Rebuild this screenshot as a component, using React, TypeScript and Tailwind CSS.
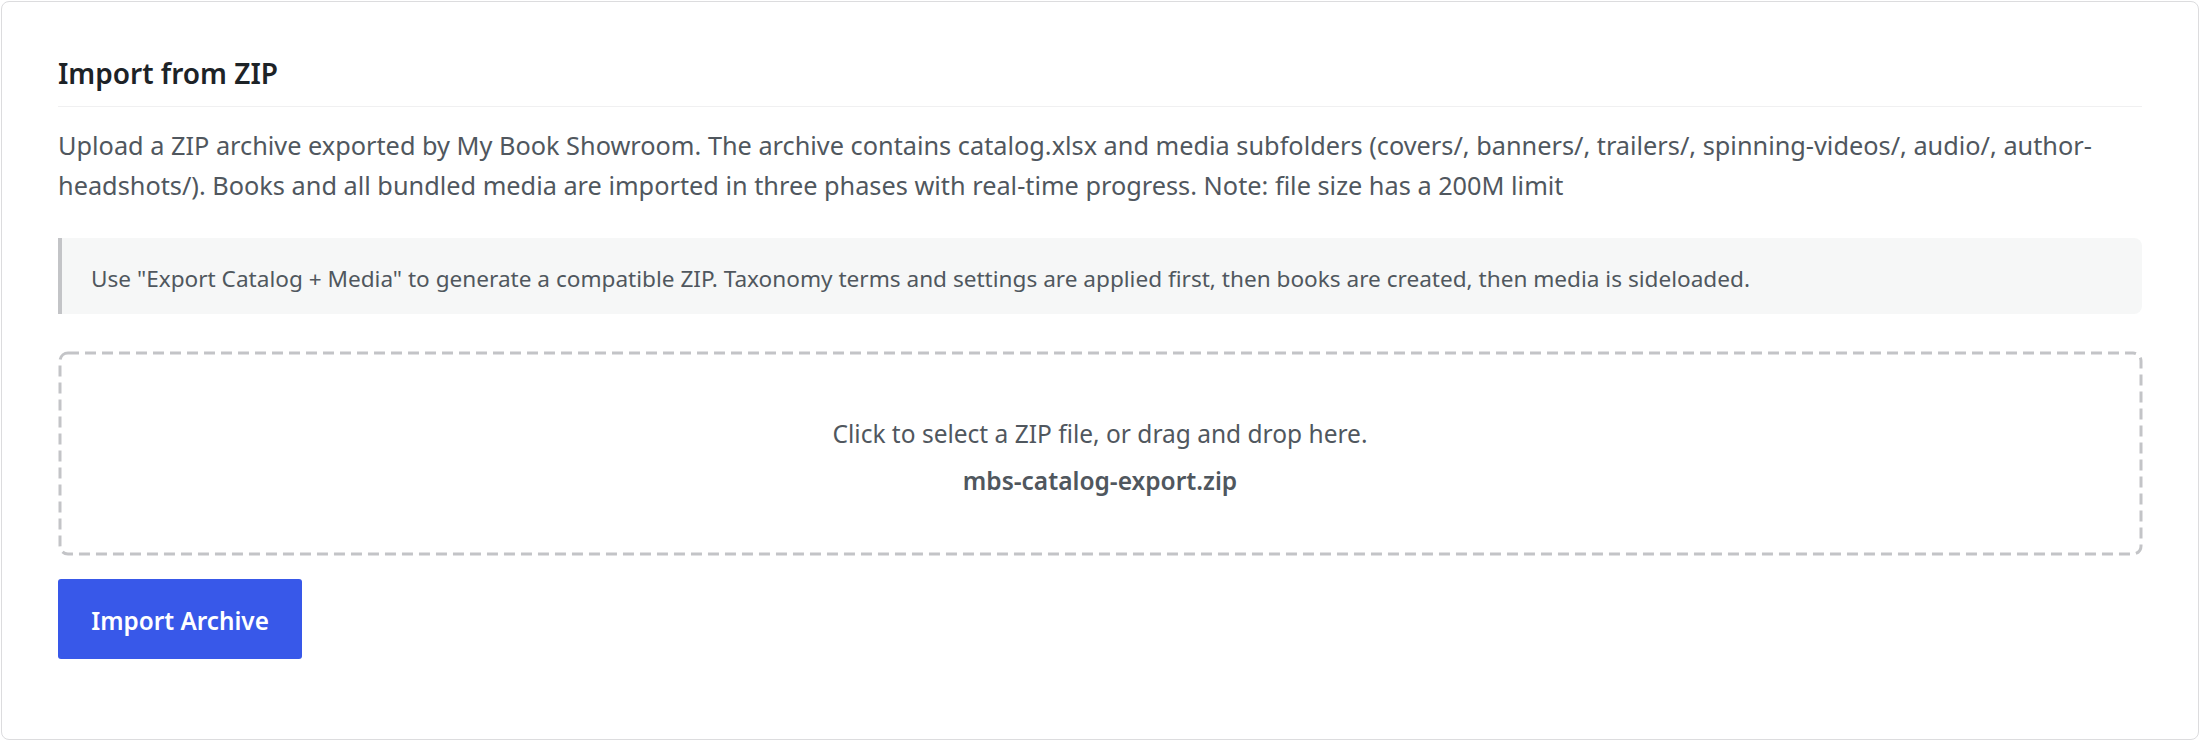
import React from "react";

export default function App() {
  const font = { fontFamily: '"Noto Sans", "Open Sans", sans-serif' };
  return (
    <div className="bg-white p-px" style={font}>
      <div className="rounded-lg border border-[#dcdcde] bg-white px-14 pt-[54px] pb-[80px]">
        <h2 className="border-b border-[#f0f0f1] pb-4 text-[28px] font-semibold leading-[34px] text-[#1d2327]">
          Import from ZIP
        </h2>
        <p className="mt-[18px] text-[25.3px] leading-[40px] text-[#50575e]">
          Upload a ZIP archive exported by My Book Showroom. The archive contains catalog.xlsx and media subfolders
          (covers/, banners/, trailers/, spinning-videos/, audio/, author-headshots/). Books and all bundled media are
          imported in three phases with real-time progress. Note: file size has a 200M limit
        </p>
        <div className="mt-[33px] rounded-r-lg border-l-4 border-[#c3c4c7] bg-[#f6f7f7] pt-[25px] pb-[19px] pl-[29px] text-[22.6px] leading-[32px] text-[#50575e]">
          Use "Export Catalog + Media" to generate a compatible ZIP. Taxonomy terms and settings are applied first, then
          books are created, then media is sideloaded.
        </div>
        <div className="relative mt-[37px] flex h-[204px] flex-col items-center justify-center gap-[15px] pt-[8px] text-[24.5px] leading-[32px] text-[#50575e]">
          <svg
            className="pointer-events-none absolute left-[1.5px] top-[1.5px] h-[calc(100%-3px)] w-[calc(100%-3px)] overflow-visible"
            aria-hidden="true"
          >
            <rect
              x="0"
              y="0"
              width="100%"
              height="100%"
              rx="8"
              ry="8"
              fill="none"
              stroke="#c3c4c7"
              strokeWidth="3"
              strokeDasharray="11 6"
            />
          </svg>
          <div>Click to select a ZIP file, or drag and drop here.</div>
          <div className="font-semibold">mbs-catalog-export.zip</div>
        </div>
        <button
          type="button"
          className="mt-[24px] flex h-[80px] w-[244px] items-center justify-center rounded-[3px] bg-[#3858e9] pt-[5px] text-[24.3px] font-semibold text-white"
        >
          Import Archive
        </button>
      </div>
    </div>
  );
}
